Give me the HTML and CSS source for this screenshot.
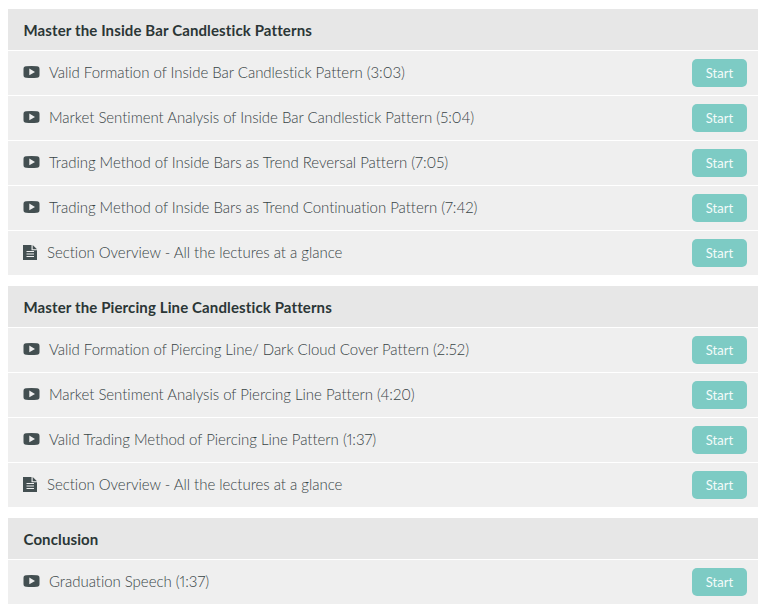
FILE: index.html
```html
<!DOCTYPE html>
<html lang="en">
<head>
    <meta charset="UTF-8">
    <title>Course Curriculum</title>
    <link rel="stylesheet" href="styles.css">
</head>
<body>
    <svg class="sprite" aria-hidden="true">
        <symbol id="icon-video" viewBox="0 0 17 12">
            <path fill-rule="evenodd" d="M3 .3Q8.500-.3 14 .3Q16.500.3 16.500 3V9Q16.500 11.700 14 11.700Q8.500 12.200 3 11.700Q.5 11.700.5 9V3Q.5.3 3 .3ZM6.300 2.500V9.300L12 5.900Z"/>
        </symbol>
        <symbol id="icon-text" viewBox="0 0 14 15">
            <path fill-rule="evenodd" d="M0 0H8.500V5.300H14V15H0ZM3.500 6V7H11V6ZM3.500 8.500V9.500H11V8.500ZM3.500 11V12H11V11Z"/>
            <path d="M9.700 0L14 4.200H9.700Z"/>
        </symbol>
    </svg>

    <div class="section">
        <h2 class="section-title">Master the Inside Bar Candlestick Patterns</h2>
        <ul class="lectures">
            <li class="lecture">
                <svg class="icon icon-video"><use href="#icon-video"/></svg>
                <span class="name">Valid Formation of Inside Bar Candlestick Pattern (3:03)</span>
                <button class="start">Start</button>
            </li>
            <li class="lecture">
                <svg class="icon icon-video"><use href="#icon-video"/></svg>
                <span class="name">Market Sentiment Analysis of Inside Bar Candlestick Pattern (5:04)</span>
                <button class="start">Start</button>
            </li>
            <li class="lecture">
                <svg class="icon icon-video"><use href="#icon-video"/></svg>
                <span class="name">Trading Method of Inside Bars as Trend Reversal Pattern (7:05)</span>
                <button class="start">Start</button>
            </li>
            <li class="lecture">
                <svg class="icon icon-video"><use href="#icon-video"/></svg>
                <span class="name">Trading Method of Inside Bars as Trend Continuation Pattern (7:42)</span>
                <button class="start">Start</button>
            </li>
            <li class="lecture">
                <svg class="icon icon-text"><use href="#icon-text"/></svg>
                <span class="name">Section Overview - All the lectures at a glance</span>
                <button class="start">Start</button>
            </li>
        </ul>
    </div>

    <div class="section">
        <h2 class="section-title">Master the Piercing Line Candlestick Patterns</h2>
        <ul class="lectures">
            <li class="lecture">
                <svg class="icon icon-video"><use href="#icon-video"/></svg>
                <span class="name">Valid Formation of Piercing Line/ Dark Cloud Cover Pattern (2:52)</span>
                <button class="start">Start</button>
            </li>
            <li class="lecture">
                <svg class="icon icon-video"><use href="#icon-video"/></svg>
                <span class="name">Market Sentiment Analysis of Piercing Line Pattern (4:20)</span>
                <button class="start">Start</button>
            </li>
            <li class="lecture">
                <svg class="icon icon-video"><use href="#icon-video"/></svg>
                <span class="name">Valid Trading Method of Piercing Line Pattern (1:37)</span>
                <button class="start">Start</button>
            </li>
            <li class="lecture">
                <svg class="icon icon-text"><use href="#icon-text"/></svg>
                <span class="name">Section Overview - All the lectures at a glance</span>
                <button class="start">Start</button>
            </li>
        </ul>
    </div>

    <div class="section">
        <h2 class="section-title">Conclusion</h2>
        <ul class="lectures">
            <li class="lecture">
                <svg class="icon icon-video"><use href="#icon-video"/></svg>
                <span class="name">Graduation Speech (1:37)</span>
                <button class="start">Start</button>
            </li>
        </ul>
    </div>
</body>
</html>
```

FILE: styles.css
```css
* { box-sizing: border-box; }
body { margin: 0; padding: 9px 7px 0 8px; background: #fff; font-family: Lato, "Open Sans", sans-serif; color: #434f51; }
.sprite { display: none; }
.section { margin-bottom: 11px; }
.section-title { margin: 0; height: 41px; padding: 0 15.500px; background: #e7e7e7; color: #2b3636; font-size: 15px; font-weight: bold; line-height: 42px; letter-spacing: 0.120px; font-variant-ligatures: none; }
.lectures { margin: 0; padding: 0; list-style: none; }
.lecture { display: flex; align-items: center; height: 45px; padding: 0 11px 0 15px; border-top: 1px solid #fff; background: #efefef; }
.icon { flex: none; fill: #434f51; }
.icon-video { width: 17px; height: 12px; margin: 0 9px 2px 0; }
.icon-text { width: 14px; height: 15px; margin: 0 10px 1px 0; }
.name { flex: 1; padding-bottom: 2px; color: #384446; font-size: 15px; font-weight: 300; line-height: 20px; letter-spacing: -0.030px; font-variant-ligatures: none; font-variant-numeric: proportional-nums; white-space: nowrap; }
.start { width: 55px; height: 28px; padding: 0 0 1px; border: none; border-radius: 5px; background: #7dcbc4; color: #f4fbfa; font-family: inherit; font-size: 13px; cursor: pointer; }
```
